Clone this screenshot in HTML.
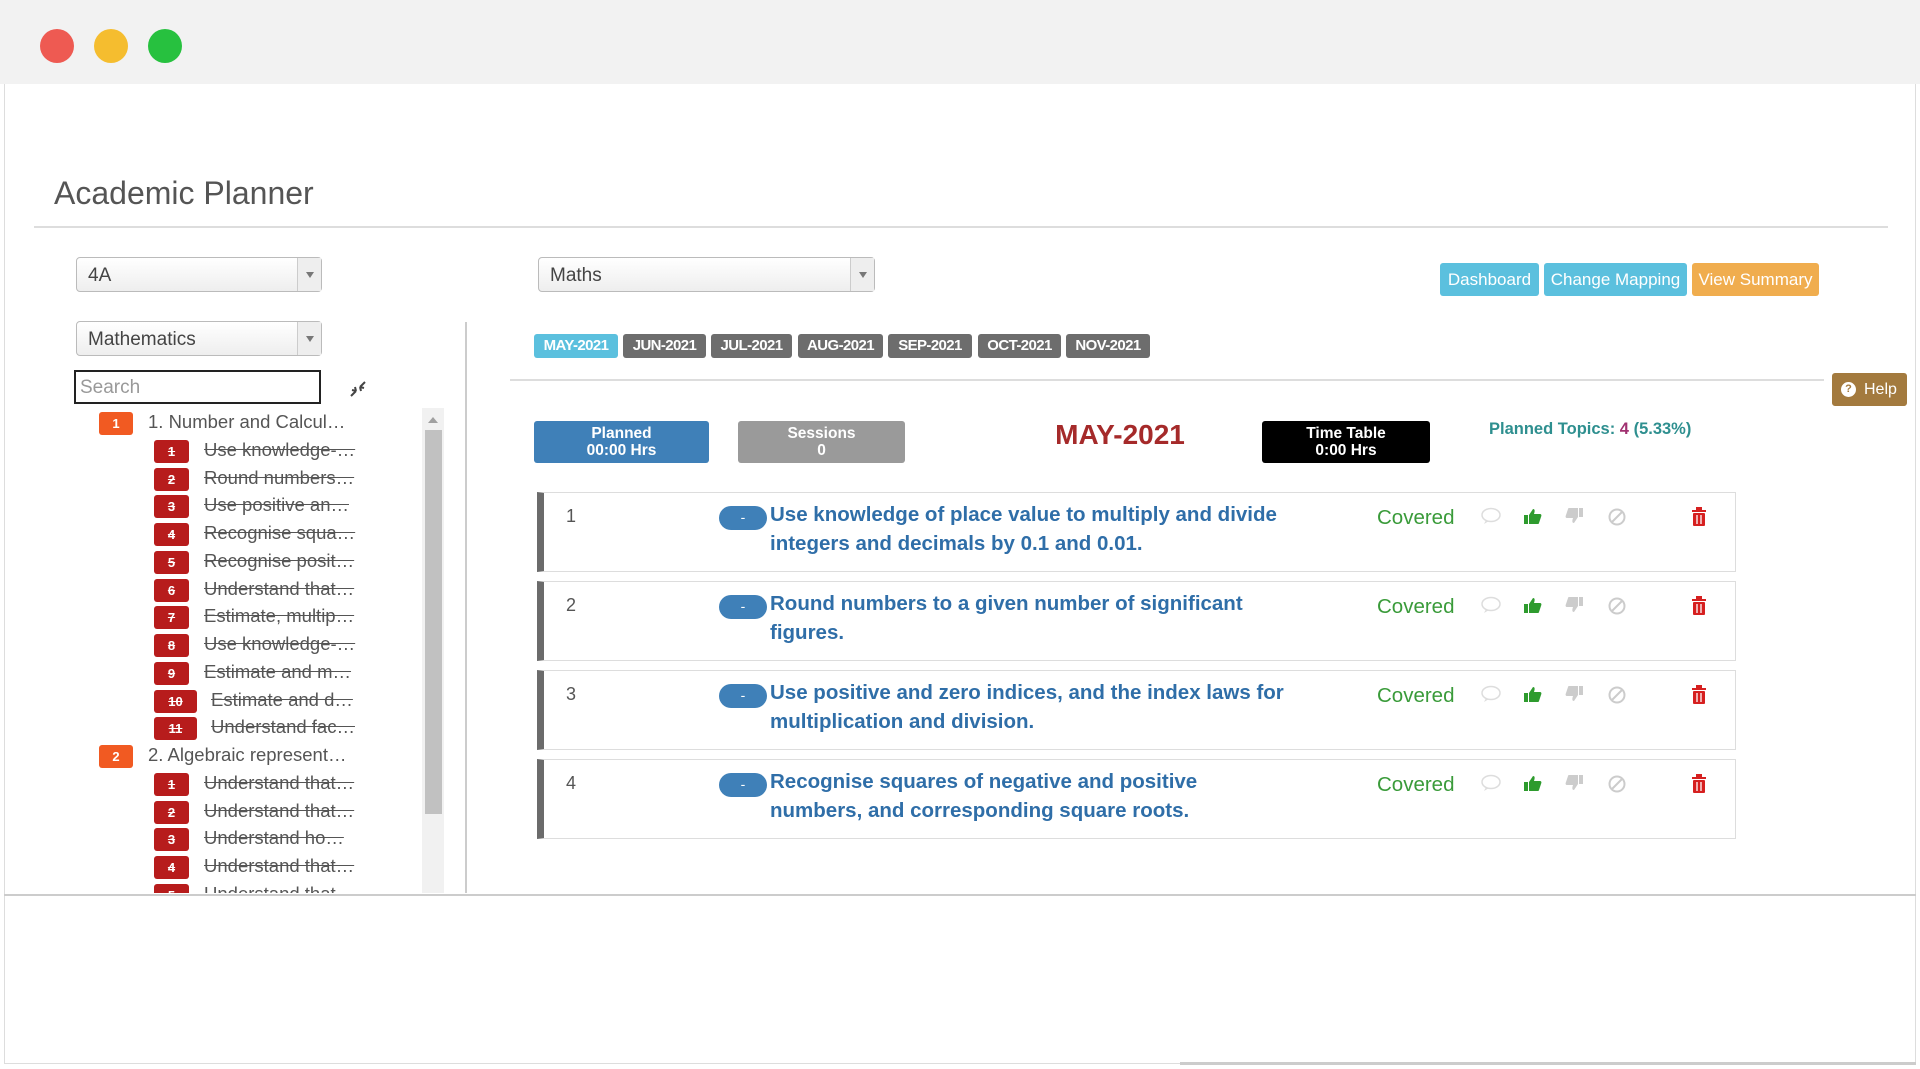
<!DOCTYPE html>
<html><head><meta charset="utf-8"><style>
*{box-sizing:border-box;margin:0;padding:0}
body{width:1920px;height:1069px;background:#fff;font-family:"Liberation Sans",Arial,sans-serif;position:relative;overflow:hidden}
.a{position:absolute}
.dot{position:absolute;width:34px;height:34px;border-radius:50%;top:29px}
.sel{position:absolute;height:35px;border:1px solid #bbb;border-radius:4px;background:linear-gradient(#fff,#eee);font-size:19px;color:#444;padding:7px 11px}
.sel .ar{position:absolute;right:0;top:0;width:24px;height:33px;border-left:1px solid #ccc;background:#eee}
.sel .ar:after{content:"";position:absolute;left:8px;top:14px;border:4px solid transparent;border-top:6px solid #777}
.tr{position:absolute;height:27px;font-size:18.5px;white-space:nowrap}
.ob{position:absolute;background:#f15a22;color:#fff;font-size:13px;font-weight:bold;text-align:center;border-radius:3px;width:34px;height:23px;line-height:23px}
.rb{position:absolute;background:#b71c1c;color:#fff;font-size:13px;font-weight:bold;text-align:center;border-radius:3px;height:23px;line-height:23px;text-decoration:line-through}
.st{position:absolute;color:#555;text-decoration:line-through}
.mt{position:absolute;top:334px;height:24px;background:#6d6d6d;color:#fff;font-size:15px;font-weight:bold;text-align:center;line-height:24px;border-radius:3px;letter-spacing:-0.6px}
.btn{position:absolute;top:263px;height:33px;color:#fff;font-size:17px;text-align:center;line-height:33px;border-radius:3px}
.box{position:absolute;top:421px;height:42px;color:#fff;font-weight:bold;font-size:15.5px;text-align:center;line-height:17px;padding-top:4px;border-radius:3px}
.row{position:absolute;left:537px;width:1199px;height:80px;border:1px solid #ddd;border-left:7px solid #6b6b6b;background:#fff}
.row .n{position:absolute;left:22px;top:13px;font-size:18px;color:#555}
.row .p{position:absolute;left:175px;top:13px;width:48px;height:24px;border-radius:12px;background:#3f80b8;color:#fff;text-align:center;font-size:14px;line-height:22px}
.row .t{position:absolute;left:226px;top:7px;width:517px;font-size:20.5px;font-weight:bold;color:#2f6ea8;line-height:29px}
.row .c{position:absolute;left:833px;top:13px;font-size:20.5px;color:#3a9b3a}
.ic{position:absolute;top:14px}
</style></head><body>
<div class="a" style="left:0;top:0;width:1920px;height:84px;background:#f2f2f2"></div>
<div class="dot" style="left:40px;background:#ee5a52"></div>
<div class="dot" style="left:94px;background:#f5bd2f"></div>
<div class="dot" style="left:148px;background:#27c13f"></div>
<div class="a" style="left:4px;top:84px;width:1px;height:980px;background:#ddd"></div>
<div class="a" style="left:1915px;top:84px;width:1px;height:980px;background:#ddd"></div>
<div class="a" style="left:54px;top:175px;font-size:32px;color:#555">Academic Planner</div>
<div class="a" style="left:34px;top:226px;width:1854px;height:2px;background:#ddd"></div>

<div class="sel" style="left:76px;top:257px;width:246px">4A<div class="ar"></div></div>
<div class="sel" style="left:76px;top:321px;width:246px">Mathematics<div class="ar"></div></div>
<div class="a" style="left:74px;top:370px;width:247px;height:34px;border:2px solid #222;font-size:19px;color:#999;padding:5px 4px">Search</div>
<svg class="a" style="left:349px;top:380px" width="18" height="18" viewBox="0 0 18 18"><path d="M2 16L7 11M16 2L11 7M7 11l-1 -4M7 11l-4 -1M11 7l1 4M11 7l4 1" stroke="#444" stroke-width="2" fill="none"/></svg>
<div class="a" style="left:465px;top:322px;width:2px;height:571px;background:#ccc"></div>
<div class="a" style="left:422px;top:408px;width:22px;height:485px;background:#f1f1f1"></div>
<div class="a" style="left:425px;top:430px;width:17px;height:384px;background:#c1c1c1"></div>
<div class="a" style="left:428px;top:417px;border:5px solid transparent;border-bottom:6px solid #a0a0a0;border-top:0"></div>

<div class="a" style="left:0;top:408px;width:420px;height:485px;overflow:hidden">
<div class="ob" style="left:99px;top:4px">1</div><div class="tr" style="left:148px;top:3px;color:#555">1. Number and Calcul…</div>
<div class="rb" style="left:154px;top:32px;width:35px">1</div><div class="tr st" style="left:204px;top:31px">Use knowledge-…</div>
<div class="rb" style="left:154px;top:60px;width:35px">2</div><div class="tr st" style="left:204px;top:59px">Round numbers…</div>
<div class="rb" style="left:154px;top:87px;width:35px">3</div><div class="tr st" style="left:204px;top:86px">Use positive an…</div>
<div class="rb" style="left:154px;top:115px;width:35px">4</div><div class="tr st" style="left:204px;top:114px">Recognise squa…</div>
<div class="rb" style="left:154px;top:143px;width:35px">5</div><div class="tr st" style="left:204px;top:142px">Recognise posit…</div>
<div class="rb" style="left:154px;top:171px;width:35px">6</div><div class="tr st" style="left:204px;top:170px">Understand that…</div>
<div class="rb" style="left:154px;top:198px;width:35px">7</div><div class="tr st" style="left:204px;top:197px">Estimate, multip…</div>
<div class="rb" style="left:154px;top:226px;width:35px">8</div><div class="tr st" style="left:204px;top:225px">Use knowledge-…</div>
<div class="rb" style="left:154px;top:254px;width:35px">9</div><div class="tr st" style="left:204px;top:253px">Estimate and m…</div>
<div class="rb" style="left:154px;top:282px;width:43px">10</div><div class="tr st" style="left:211px;top:281px">Estimate and d…</div>
<div class="rb" style="left:154px;top:309px;width:43px">11</div><div class="tr st" style="left:211px;top:308px">Understand fac…</div>
<div class="ob" style="left:99px;top:337px">2</div><div class="tr" style="left:148px;top:336px;color:#555">2. Algebraic represent…</div>
<div class="rb" style="left:154px;top:365px;width:35px">1</div><div class="tr st" style="left:204px;top:364px">Understand that…</div>
<div class="rb" style="left:154px;top:393px;width:35px">2</div><div class="tr st" style="left:204px;top:392px">Understand that…</div>
<div class="rb" style="left:154px;top:420px;width:35px">3</div><div class="tr st" style="left:204px;top:419px">Understand ho…</div>
<div class="rb" style="left:154px;top:448px;width:35px">4</div><div class="tr st" style="left:204px;top:447px">Understand that…</div>
<div class="rb" style="left:154px;top:476px;width:35px">5</div><div class="tr st" style="left:204px;top:475px">Understand that…</div>
</div>

<div class="sel" style="left:538px;top:257px;width:337px">Maths<div class="ar"></div></div>
<div class="mt" style="left:534px;width:84px;background:#5bc0de">MAY-2021</div>
<div class="mt" style="left:623px;width:83px">JUN-2021</div>
<div class="mt" style="left:711px;width:81px">JUL-2021</div>
<div class="mt" style="left:798px;width:85px">AUG-2021</div>
<div class="mt" style="left:888px;width:84px">SEP-2021</div>
<div class="mt" style="left:978px;width:83px">OCT-2021</div>
<div class="mt" style="left:1066px;width:84px">NOV-2021</div>
<div class="a" style="left:510px;top:379px;width:1314px;height:2px;background:#ddd"></div>

<div class="btn" style="left:1440px;width:99px;background:#5bc0de">Dashboard</div>
<div class="btn" style="left:1544px;width:143px;background:#5bc0de">Change Mapping</div>
<div class="btn" style="left:1692px;width:127px;background:#f0ad4e">View Summary</div>
<div class="a" style="left:1832px;top:373px;width:75px;height:33px;background:#a37a3e;border-radius:3px;color:#fff;font-size:16px;line-height:33px;padding-left:32px">Help<span style="position:absolute;left:9px;top:9px;width:15px;height:15px;border-radius:50%;background:#fff;color:#a37a3e;font-size:11px;font-weight:bold;line-height:15px;text-align:center">?</span></div>

<div class="box" style="left:534px;width:175px;background:#3f80b8">Planned<br>00:00 Hrs</div>
<div class="box" style="left:738px;width:167px;background:#9a9a9a">Sessions<br>0</div>
<div class="a" style="left:1040px;top:419px;width:160px;text-align:center;font-size:28px;font-weight:bold;color:#a52a2a">MAY-2021</div>
<div class="box" style="left:1262px;width:168px;background:#000">Time Table<br>0:00 Hrs</div>
<div class="a" style="left:1489px;top:420px;font-size:16.5px;font-weight:bold;color:#2e8f8f">Planned Topics: <span style="color:#a03070">4</span> (5.33%)</div>

<div class="row" style="top:492px"><div class="n">1</div><div class="p">-</div><div class="t">Use knowledge of place value to multiply and divide integers and decimals by 0.1 and 0.01.</div><div class="c">Covered</div>
<svg class="ic" style="left:937px" width="20" height="18"><ellipse cx="10" cy="8" rx="9" ry="6.5" fill="none" stroke="#ddd" stroke-width="1.5"/><path d="M5 13l-2 4 5-3" fill="#ddd"/></svg>
<svg class="ic" style="left:979px" width="20" height="18"><rect x="1" y="8" width="4" height="9" fill="#2e9b2e"/><path d="M6 8l4-6c2 0 2 2 1 5h6c1 0 2 1 1 3l-2 6c0 1-1 1-2 1H6z" fill="#2e9b2e"/></svg>
<svg class="ic" style="left:1020px" width="20" height="18"><g transform="rotate(180 10 9)"><rect x="1" y="8" width="4" height="9" fill="#ccc"/><path d="M6 8l4-6c2 0 2 2 1 5h6c1 0 2 1 1 3l-2 6c0 1-1 1-2 1H6z" fill="#ccc"/></g></svg>
<svg class="ic" style="left:1063px" width="20" height="20"><circle cx="10" cy="10" r="7.5" fill="none" stroke="#ccc" stroke-width="2"/><path d="M5 15L15 5" stroke="#ccc" stroke-width="2"/></svg>
<svg class="ic" style="left:1147px" width="16" height="20"><rect x="1" y="3" width="14" height="2" fill="#d62020"/><rect x="5" y="0" width="6" height="3" fill="#d62020"/><rect x="2" y="6" width="12" height="13" rx="1" fill="#d62020"/><path d="M6 8v9M10 8v9" stroke="#fff" stroke-width="1.3"/></svg></div>

<div class="row" style="top:581px"><div class="n">2</div><div class="p">-</div><div class="t">Round numbers to a given number of significant figures.</div><div class="c">Covered</div>
<svg class="ic" style="left:937px" width="20" height="18"><ellipse cx="10" cy="8" rx="9" ry="6.5" fill="none" stroke="#ddd" stroke-width="1.5"/><path d="M5 13l-2 4 5-3" fill="#ddd"/></svg>
<svg class="ic" style="left:979px" width="20" height="18"><rect x="1" y="8" width="4" height="9" fill="#2e9b2e"/><path d="M6 8l4-6c2 0 2 2 1 5h6c1 0 2 1 1 3l-2 6c0 1-1 1-2 1H6z" fill="#2e9b2e"/></svg>
<svg class="ic" style="left:1020px" width="20" height="18"><g transform="rotate(180 10 9)"><rect x="1" y="8" width="4" height="9" fill="#ccc"/><path d="M6 8l4-6c2 0 2 2 1 5h6c1 0 2 1 1 3l-2 6c0 1-1 1-2 1H6z" fill="#ccc"/></g></svg>
<svg class="ic" style="left:1063px" width="20" height="20"><circle cx="10" cy="10" r="7.5" fill="none" stroke="#ccc" stroke-width="2"/><path d="M5 15L15 5" stroke="#ccc" stroke-width="2"/></svg>
<svg class="ic" style="left:1147px" width="16" height="20"><rect x="1" y="3" width="14" height="2" fill="#d62020"/><rect x="5" y="0" width="6" height="3" fill="#d62020"/><rect x="2" y="6" width="12" height="13" rx="1" fill="#d62020"/><path d="M6 8v9M10 8v9" stroke="#fff" stroke-width="1.3"/></svg></div>

<div class="row" style="top:670px"><div class="n">3</div><div class="p">-</div><div class="t">Use positive and zero indices, and the index laws for multiplication and division.</div><div class="c">Covered</div>
<svg class="ic" style="left:937px" width="20" height="18"><ellipse cx="10" cy="8" rx="9" ry="6.5" fill="none" stroke="#ddd" stroke-width="1.5"/><path d="M5 13l-2 4 5-3" fill="#ddd"/></svg>
<svg class="ic" style="left:979px" width="20" height="18"><rect x="1" y="8" width="4" height="9" fill="#2e9b2e"/><path d="M6 8l4-6c2 0 2 2 1 5h6c1 0 2 1 1 3l-2 6c0 1-1 1-2 1H6z" fill="#2e9b2e"/></svg>
<svg class="ic" style="left:1020px" width="20" height="18"><g transform="rotate(180 10 9)"><rect x="1" y="8" width="4" height="9" fill="#ccc"/><path d="M6 8l4-6c2 0 2 2 1 5h6c1 0 2 1 1 3l-2 6c0 1-1 1-2 1H6z" fill="#ccc"/></g></svg>
<svg class="ic" style="left:1063px" width="20" height="20"><circle cx="10" cy="10" r="7.5" fill="none" stroke="#ccc" stroke-width="2"/><path d="M5 15L15 5" stroke="#ccc" stroke-width="2"/></svg>
<svg class="ic" style="left:1147px" width="16" height="20"><rect x="1" y="3" width="14" height="2" fill="#d62020"/><rect x="5" y="0" width="6" height="3" fill="#d62020"/><rect x="2" y="6" width="12" height="13" rx="1" fill="#d62020"/><path d="M6 8v9M10 8v9" stroke="#fff" stroke-width="1.3"/></svg></div>

<div class="row" style="top:759px"><div class="n">4</div><div class="p">-</div><div class="t">Recognise squares of negative and positive numbers, and corresponding square roots.</div><div class="c">Covered</div>
<svg class="ic" style="left:937px" width="20" height="18"><ellipse cx="10" cy="8" rx="9" ry="6.5" fill="none" stroke="#ddd" stroke-width="1.5"/><path d="M5 13l-2 4 5-3" fill="#ddd"/></svg>
<svg class="ic" style="left:979px" width="20" height="18"><rect x="1" y="8" width="4" height="9" fill="#2e9b2e"/><path d="M6 8l4-6c2 0 2 2 1 5h6c1 0 2 1 1 3l-2 6c0 1-1 1-2 1H6z" fill="#2e9b2e"/></svg>
<svg class="ic" style="left:1020px" width="20" height="18"><g transform="rotate(180 10 9)"><rect x="1" y="8" width="4" height="9" fill="#ccc"/><path d="M6 8l4-6c2 0 2 2 1 5h6c1 0 2 1 1 3l-2 6c0 1-1 1-2 1H6z" fill="#ccc"/></g></svg>
<svg class="ic" style="left:1063px" width="20" height="20"><circle cx="10" cy="10" r="7.5" fill="none" stroke="#ccc" stroke-width="2"/><path d="M5 15L15 5" stroke="#ccc" stroke-width="2"/></svg>
<svg class="ic" style="left:1147px" width="16" height="20"><rect x="1" y="3" width="14" height="2" fill="#d62020"/><rect x="5" y="0" width="6" height="3" fill="#d62020"/><rect x="2" y="6" width="12" height="13" rx="1" fill="#d62020"/><path d="M6 8v9M10 8v9" stroke="#fff" stroke-width="1.3"/></svg></div>

<div class="a" style="left:4px;top:894px;width:1912px;height:2px;background:#ccc"></div>
<div class="a" style="left:4px;top:1063px;width:1912px;height:1px;background:#ddd"></div>
<div class="a" style="left:1180px;top:1062px;width:736px;height:3px;background:#ccc"></div>
</body></html>
